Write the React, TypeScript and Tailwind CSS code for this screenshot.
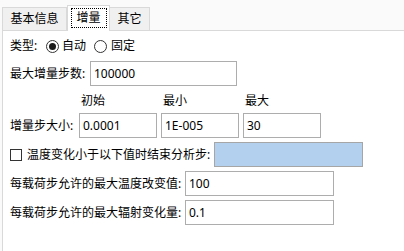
import React from "react";

const font = { fontFamily: '"Noto Sans", "Noto Sans CJK SC", sans-serif' };

function Radio({ checked }: { checked: boolean }) {
  return (
    <svg width="13" height="13" viewBox="0 0 13 13" className="shrink-0">
      <circle cx="6.5" cy="6.5" r="6" fill="#fff" stroke="#333" strokeWidth="1" />
      {checked && <circle cx="6.5" cy="6.5" r="3.5" fill="#1a1a1a" />}
    </svg>
  );
}

function Input({ value, w }: { value: string; w: string }) {
  return (
    <div className={`${w} h-[25px] border border-[#adadad] bg-white flex items-center pl-[3px] text-[12px] text-black shrink-0`}>
      {value}
    </div>
  );
}

export default function App() {
  return (
    <div className="w-[404px] h-[251px] bg-[#fafafa] flex flex-col text-[12px] text-black leading-none overflow-hidden" style={font}>
      <div className="h-[30px] flex items-end pl-[2px] shrink-0">
        <div className="w-[65px] h-[23px] bg-[#f0f0f0] border border-b-0 border-[#d9d9d9] flex items-center justify-center">
          基本信息
        </div>
        <div className="relative z-10 -mb-[1px] w-[43px] h-[26px] bg-white border border-b-0 border-[#d9d9d9] flex items-center justify-center">
          <div className="w-[36px] h-[20px] border border-dotted border-black flex items-center justify-center -mt-[2px]">
            增量
          </div>
        </div>
        <div className="w-[40px] h-[23px] bg-[#f0f0f0] border border-b-0 border-l-0 border-[#d9d9d9] flex items-center justify-center">
          其它
        </div>
      </div>
      <div className="flex-1 bg-white border-l border-t border-[#d9d9d9] ml-[2px] pl-[7px] flex flex-col">
        <div className="mt-[7px] h-[16px] flex items-center">
          <span className="w-[36px]">类型:</span>
          <Radio checked />
          <span className="ml-[3px] w-[32px]">自动</span>
          <Radio checked={false} />
          <span className="ml-[4px]">固定</span>
        </div>
        <div className="mt-[7px] flex items-center">
          <span className="w-[80px]">最大增量步数:</span>
          <Input value="100000" w="w-[147px]" />
        </div>
        <div className="mt-[7px] h-[16px] flex items-center">
          <span className="w-[71px]" />
          <span className="w-[82px]">初始</span>
          <span className="w-[82px]">最小</span>
          <span>最大</span>
        </div>
        <div className="mt-[4px] flex items-center gap-[4px]">
          <span className="w-[65px]">增量步大小:</span>
          <Input value="0.0001" w="w-[78px]" />
          <Input value="1E-005" w="w-[78px]" />
          <Input value="30" w="w-[78px]" />
        </div>
        <div className="mt-[4px] flex items-center h-[25px]">
          <div className="w-[12px] h-[12px] border border-[#333] bg-white shrink-0" />
          <span className="ml-[5px] w-[187px]">温度变化小于以下值时结束分析步:</span>
          <div className="w-[149px] h-[25px] bg-[#b3d1ee] border border-[#a6a6a6]" />
        </div>
        <div className="mt-[4px] flex items-center">
          <span className="w-[175px]">每载荷步允许的最大温度改变值:</span>
          <Input value="100" w="w-[149px]" />
        </div>
        <div className="mt-[4px] flex items-center">
          <span className="w-[175px]">每载荷步允许的最大辐射变化量:</span>
          <Input value="0.1" w="w-[149px]" />
        </div>
      </div>
    </div>
  );
}
